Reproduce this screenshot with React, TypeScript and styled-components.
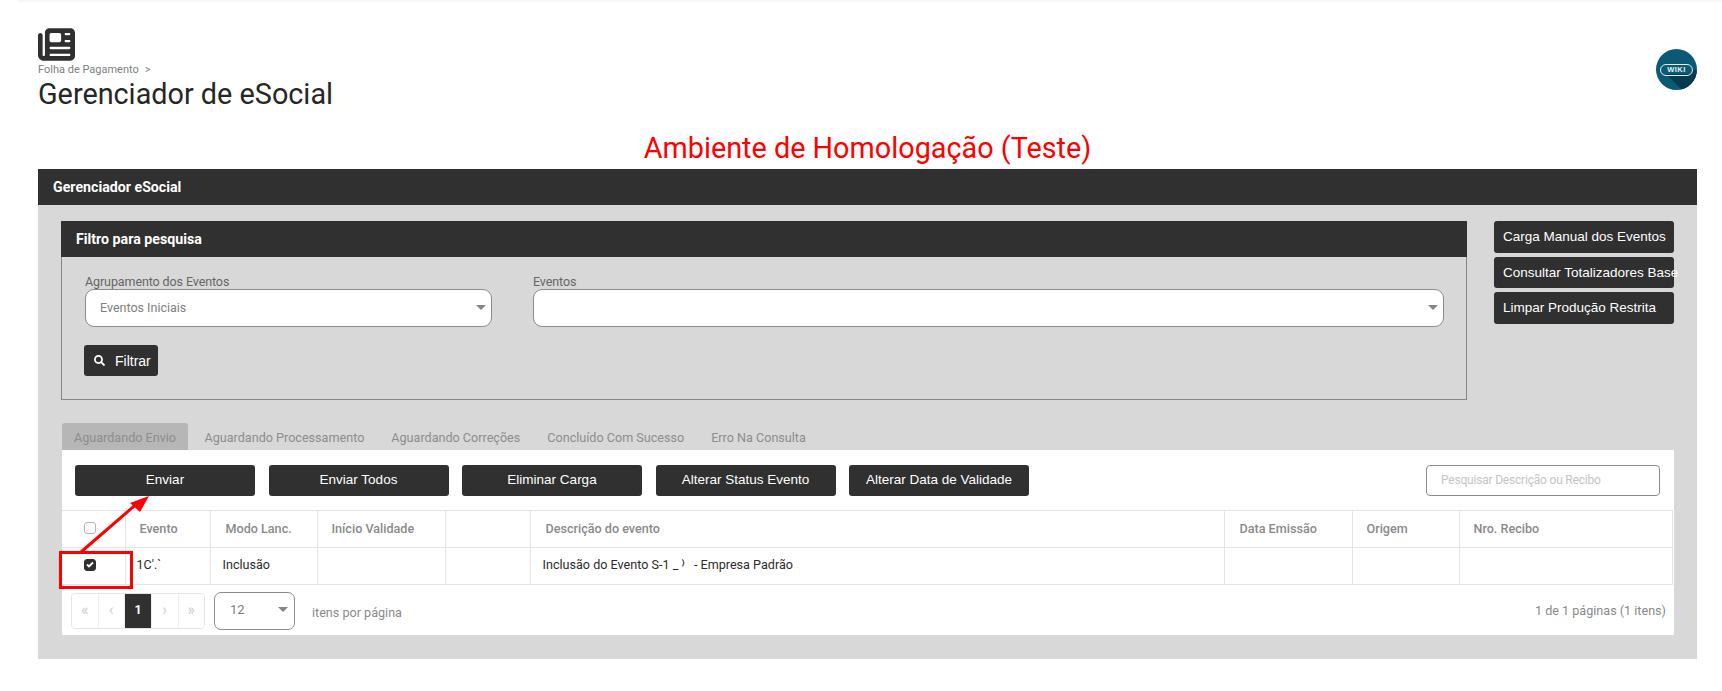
import styled, { createGlobalStyle } from 'styled-components';
import { FaSearch } from 'react-icons/fa';
import { FaNewspaper } from 'react-icons/fa6';

const colors = {
  dark: '#303030',
  panel: '#d8d8d8',
  line: '#e3e4e8',
  muted: '#8a8a8a',
  red: '#ff0000',
};

const GlobalStyle = createGlobalStyle`
  html, body {
    margin: 0;
    background: #fff;
    font-family: Roboto, "Liberation Sans", sans-serif;
    color: #222;
  }
  * { box-sizing: border-box; }
`;

const Page = styled.div`
  position: relative;
  width: 1722px;
  height: 691px;
  overflow: hidden;
`;

const TopShadow = styled.div`
  height: 3px;
  margin-left: 18px;
  background: linear-gradient(#f4f4f4, #fff);
`;

const PageHead = styled.header`
  display: flex;
  justify-content: space-between;
  align-items: flex-start;
  padding: 23px 25px 0 38px;
  height: 128px;
`;

const PageIcon = styled(FaNewspaper)`
  display: block;
  width: 37px;
  height: 37px;
  color: ${colors.dark};
`;

const Breadcrumb = styled.div`
  display: flex;
  gap: 6px;
  font-size: 11px;
  line-height: 13px;
  color: #808080;
`;

const PageTitle = styled.h1`
  margin: 1px 0 0;
  font-size: 28.8px;
  font-weight: 400;
  line-height: 34px;
  color: #262626;
`;

const WikiBadge = styled.div`
  position: relative;
  display: grid;
  place-items: center;
  width: 41px;
  height: 41px;
  margin-top: 23px;
  border-radius: 50%;
  overflow: hidden;
  background: #0b5a75;
`;

const WikiShade = styled.svg`
  position: absolute;
  inset: 0;
`;

const WikiPill = styled.span`
  position: relative;
  display: block;
  width: 33px;
  height: 12px;
  border: 1.5px solid #e4eef1;
  border-radius: 6px;
  font-family: "Liberation Sans", sans-serif;
  font-size: 7.5px;
  font-weight: 700;
  line-height: 9px;
  letter-spacing: 0.5px;
  text-align: center;
  color: #e4eef1;
`;

const EnvTitle = styled.h2`
  margin: 0;
  width: 1659px;
  height: 38px;
  margin-left: 38px;
  padding-top: 2px;
  font-size: 28.8px;
  font-weight: 400;
  line-height: 30px;
  text-align: center;
  color: ${colors.red};
`;

const Section = styled.section`
  width: 1659px;
  margin-left: 38px;
  background: ${colors.panel};
`;

const BarTitle = styled.div<{ $height: number; $pad: number }>`
  height: ${(p) => p.$height}px;
  padding-left: ${(p) => p.$pad}px;
  background: ${colors.dark};
  color: #fff;
  font-size: 14.2px;
  font-weight: 700;
  line-height: ${(p) => p.$height}px;
`;

const SectionBody = styled.div`
  padding: 16px 23px 24px;
`;

const TopGrid = styled.div`
  display: grid;
  grid-template-columns: 1406px 180px;
  column-gap: 27px;
  align-items: start;
`;

const FilterBox = styled.div`
  height: 143px;
  border: 1px solid #858585;
  border-top: 0;
`;

const FilterFields = styled.div`
  display: grid;
  grid-template-columns: 407px 911px;
  column-gap: 41px;
  padding: 16px 0 0 23px;
`;

const FieldLabel = styled.label`
  display: block;
  height: 16px;
  font-size: 12.5px;
  line-height: 18px;
  letter-spacing: -0.1px;
  color: #666;
`;

const SelectBox = styled.div`
  position: relative;
  height: 38px;
  padding-left: 14px;
  border: 1px solid #8c8c8c;
  border-radius: 9px;
  background: #fff;
  font-size: 12.5px;
  line-height: 35px;
  color: #808080;
`;

const Caret = styled.span`
  position: absolute;
  right: 5px;
  top: 15px;
  width: 0;
  height: 0;
  border-left: 5.5px solid transparent;
  border-right: 5.5px solid transparent;
  border-top: 5.5px solid #858585;
`;

const FilterButton = styled.button`
  display: flex;
  align-items: center;
  gap: 10px;
  width: 74px;
  height: 31px;
  margin: 18px 0 0 22px;
  padding: 0 0 0 10px;
  border: 0;
  border-radius: 3px;
  background: ${colors.dark};
  color: #fff;
  font-family: "Liberation Sans", sans-serif;
  font-size: 14px;
`;

const SideActions = styled.div`
  display: flex;
  flex-direction: column;
  gap: 4px;
`;

const SideButton = styled.button`
  width: 180px;
  height: 31.5px;
  padding: 0 0 0 9px;
  border: 0;
  border-radius: 3px;
  background: ${colors.dark};
  color: #fff;
  font-family: "Liberation Sans", sans-serif;
  font-size: 13.5px;
  text-align: left;
  white-space: nowrap;
`;

const Tabs = styled.div`
  display: flex;
  height: 27px;
  margin: 23px 0 0 1px;
`;

const Tab = styled.div<{ $active?: boolean }>`
  margin-right: ${(p) => (p.$active ? 3 : 0)}px;
  padding: 0 ${(p) => (p.$active ? 12 : 13.5)}px;
  border-radius: 3px 3px 0 0;
  background: ${(p) => (p.$active ? '#b6b6b6' : 'transparent')};
  font-size: 12.6px;
  line-height: 29px;
  color: #8d8d8d;
`;

const TabPanel = styled.div`
  width: 1612px;
  height: 185px;
  margin-left: 1px;
  background: #fff;
`;

const Toolbar = styled.div`
  display: flex;
  align-items: center;
  height: 60px;
  padding: 0 14px 0 13px;
`;

const ActionGroup = styled.div`
  display: flex;
  gap: 13.5px;
  flex: 1;
`;

const ActionButton = styled.button<{ $width: number }>`
  width: ${(p) => p.$width}px;
  height: 31px;
  padding: 0 0 2px;
  border: 0;
  border-radius: 3px;
  background: ${colors.dark};
  color: #fff;
  font-family: "Liberation Sans", sans-serif;
  font-size: 13.5px;
`;

const SearchInput = styled.div`
  width: 234px;
  height: 31px;
  padding-left: 14px;
  border: 1px solid #8c8c8c;
  border-radius: 4px;
  font-size: 12px;
  line-height: 29px;
  letter-spacing: -0.2px;
  color: #c4c4c8;
`;

const Table = styled.table`
  width: 1610px;
  border-collapse: collapse;
  table-layout: fixed;
  border-top: 1px solid ${colors.line};
`;

const HeadCell = styled.th<{ $pad?: number }>`
  height: 37px;
  padding: 0 0 2px ${(p) => p.$pad ?? 14}px;
  border: 1px solid ${colors.line};
  border-left: 0;
  font-size: 12.6px;
  font-weight: 500;
  text-align: left;
  color: #8a8a8a;
  &:last-child { border-right: 1px solid ${colors.line}; }
`;

const BodyCell = styled.td<{ $pad?: number }>`
  height: 37px;
  padding: 0 0 3px ${(p) => p.$pad ?? 12}px;
  border: 1px solid ${colors.line};
  border-left: 0;
  font-size: 12.6px;
  color: #2c2c2c;
`;

const CheckHolder = styled.div`
  display: flex;
  justify-content: center;
  padding-right: 6px;
`;

const CheckBox = styled.span<{ $checked?: boolean }>`
  display: grid;
  place-items: center;
  width: 12px;
  height: 12px;
  border: 1px solid ${(p) => (p.$checked ? colors.dark : '#b5b5b5')};
  border-radius: 3px;
  background: ${(p) => (p.$checked ? colors.dark : '#fff')};
`;

const FooterRow = styled.div`
  display: flex;
  align-items: center;
  padding: 7px 8px 0 9px;
`;

const Pager = styled.div`
  display: flex;
  width: 134px;
  height: 36px;
  border: 1px solid #e6e6e6;
  border-radius: 4px;
  overflow: hidden;
`;

const PagerCell = styled.span<{ $active?: boolean; $width?: number }>`
  flex: ${(p) => (p.$width ? `0 0 ${p.$width}px` : '1')};
  border-right: 1px solid #efefef;
  background: ${(p) => (p.$active ? colors.dark : '#fff')};
  color: ${(p) => (p.$active ? '#fff' : '#ccc')};
  font-size: ${(p) => (p.$active ? 12.5 : 16)}px;
  font-weight: ${(p) => (p.$active ? 700 : 400)};
  line-height: 32px;
  text-align: center;
  &:last-child { border-right: 0; }
`;

const PageSize = styled.div`
  position: relative;
  width: 81px;
  height: 38px;
  margin-left: 9px;
  padding-left: 15px;
  border: 1px solid #8c8c8c;
  border-radius: 7px;
  font-size: 13px;
  line-height: 34px;
  color: #808080;
`;

const PageSizeCaret = styled(Caret)`
  right: 6px;
  top: 14px;
`;

const PerPage = styled.span`
  margin: 3px 0 0 17px;
  flex: 1;
  font-size: 12.6px;
  color: #8a8a8a;
`;

const PageInfo = styled.span`
  margin-top: -2px;
  font-size: 12.6px;
  color: #8a8a8a;
`;

const Callout = styled.div`
  position: absolute;
  left: 59px;
  top: 551px;
  width: 74px;
  height: 38px;
  border: 3px solid ${colors.red};
`;

const ArrowLayer = styled.svg`
  position: absolute;
  left: 70px;
  top: 490px;
  pointer-events: none;
`;

const columns = [
  { width: 63, label: '', pad: 0 },
  { width: 85, label: 'Evento', pad: 14 },
  { width: 107, label: 'Modo Lanc.', pad: 15 },
  { width: 128, label: 'Início Validade', pad: 14 },
  { width: 85, label: '', pad: 14 },
  { width: 694, label: 'Descrição do evento', pad: 15 },
  { width: 128, label: 'Data Emissão', pad: 15 },
  { width: 107, label: 'Origem', pad: 14 },
  { width: 213, label: 'Nro. Recibo', pad: 14 },
];

const actions = [
  { label: 'Enviar', width: 180 },
  { label: 'Enviar Todos', width: 180 },
  { label: 'Eliminar Carga', width: 180 },
  { label: 'Alterar Status Evento', width: 180 },
  { label: 'Alterar Data de Validade', width: 180 },
];

const tabs = ['Aguardando Envio', 'Aguardando Processamento', 'Aguardando Correções', 'Concluído Com Sucesso', 'Erro Na Consulta'];

export default function App() {
  return (
    <Page>
      <GlobalStyle />
      <TopShadow />
      <PageHead>
        <div>
          <PageIcon />
          <Breadcrumb>
            <span>Folha de Pagamento</span>
            <span>&gt;</span>
          </Breadcrumb>
          <PageTitle>Gerenciador de eSocial</PageTitle>
        </div>
        <WikiBadge>
          <WikiShade width="41" height="41" viewBox="0 0 41 41">
            <path d="M10 25 L26 41 L41 41 L41 22 L36 19 L36 25 Z" fill="#053a50" />
          </WikiShade>
          <WikiPill>WIKI</WikiPill>
        </WikiBadge>
      </PageHead>

      <EnvTitle>Ambiente de Homologação (Teste)</EnvTitle>

      <Section>
        <BarTitle $height={36} $pad={15}>Gerenciador eSocial</BarTitle>
        <SectionBody>
          <TopGrid>
            <div>
              <BarTitle $height={36} $pad={15}>Filtro para pesquisa</BarTitle>
              <FilterBox>
                <FilterFields>
                  <div>
                    <FieldLabel>Agrupamento dos Eventos</FieldLabel>
                    <SelectBox>
                      Eventos Iniciais
                      <Caret />
                    </SelectBox>
                  </div>
                  <div>
                    <FieldLabel>Eventos</FieldLabel>
                    <SelectBox>
                      <Caret />
                    </SelectBox>
                  </div>
                </FilterFields>
                <FilterButton>
                  <FaSearch size={11} />
                  Filtrar
                </FilterButton>
              </FilterBox>
            </div>
            <SideActions>
              <SideButton>Carga Manual dos Eventos</SideButton>
              <SideButton>Consultar Totalizadores Base</SideButton>
              <SideButton>Limpar Produção Restrita</SideButton>
            </SideActions>
          </TopGrid>

          <Tabs>
            {tabs.map((tab, index) => (
              <Tab key={tab} $active={index === 0}>{tab}</Tab>
            ))}
          </Tabs>
          <TabPanel>
            <Toolbar>
              <ActionGroup>
                {actions.map((a) => (
                  <ActionButton key={a.label} $width={a.width}>{a.label}</ActionButton>
                ))}
              </ActionGroup>
              <SearchInput>Pesquisar Descrição ou Recibo</SearchInput>
            </Toolbar>

            <Table>
              <colgroup>
                {columns.map((c, i) => (
                  <col key={i} width={c.width} />
                ))}
              </colgroup>
              <thead>
                <tr>
                  <HeadCell $pad={0}>
                    <CheckHolder><CheckBox /></CheckHolder>
                  </HeadCell>
                  {columns.slice(1).map((c, i) => (
                    <HeadCell key={i} $pad={c.pad}>{c.label}</HeadCell>
                  ))}
                </tr>
              </thead>
              <tbody>
                <tr>
                  <BodyCell $pad={0}>
                    <CheckHolder>
                      <CheckBox $checked>
                        <svg width="8" height="7" viewBox="0 0 8 7">
                          <path d="M1 3.5 L3 5.5 L7 1.5" fill="none" stroke="#fff" strokeWidth="1.8" />
                        </svg>
                      </CheckBox>
                    </CheckHolder>
                  </BodyCell>
                  <BodyCell $pad={11}>1C'.`</BodyCell>
                  <BodyCell>Inclusão</BodyCell>
                  <BodyCell />
                  <BodyCell />
                  <BodyCell>Inclusão do Evento S-1 _ ⁾ &nbsp;&nbsp;- Empresa Padrão</BodyCell>
                  <BodyCell />
                  <BodyCell />
                  <BodyCell />
                </tr>
              </tbody>
            </Table>

            <FooterRow>
              <Pager>
                <PagerCell>«</PagerCell>
                <PagerCell>‹</PagerCell>
                <PagerCell $active $width={27}>1</PagerCell>
                <PagerCell>›</PagerCell>
                <PagerCell>»</PagerCell>
              </Pager>
              <PageSize>
                12
                <PageSizeCaret />
              </PageSize>
              <PerPage>itens por página</PerPage>
              <PageInfo>1 de 1 páginas (1 itens)</PageInfo>
            </FooterRow>
          </TabPanel>
        </SectionBody>
      </Section>

      <Callout />
      <ArrowLayer width="90" height="70" viewBox="0 0 90 70">
        <line x1="11" y1="62" x2="70" y2="11" stroke={colors.red} strokeWidth="3" />
        <path d="M79 6 L60 13 L70 22 Z" fill={colors.red} />
      </ArrowLayer>
    </Page>
  );
}
